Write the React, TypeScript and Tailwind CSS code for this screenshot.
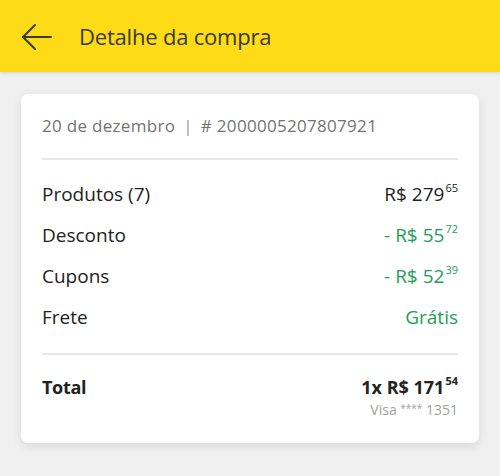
type Row = { label: string; prefix: string; whole: string; cents?: string; green?: boolean };

const rows: Row[] = [
  { label: "Produtos (7)", prefix: "R$ ", whole: "279", cents: "65" },
  { label: "Desconto", prefix: "- R$ ", whole: "55", cents: "72", green: true },
  { label: "Cupons", prefix: "- R$ ", whole: "52", cents: "39", green: true },
  { label: "Frete", prefix: "", whole: "Grátis", green: true },
];

const Price = ({ prefix, whole, cents }: { prefix: string; whole: string; cents?: string }) => (
  <span className="flex items-start leading-none">
    <span className="whitespace-pre">
      {prefix}
      {whole}
    </span>
    {cents && <span className="text-[11px] leading-none ml-[1px] -mt-[3px]">{cents}</span>}
  </span>
);

const BackArrow = () => (
  <svg width="32" height="28" viewBox="0 0 32 28" fill="none" stroke="#3b3a26" strokeWidth="2" strokeLinecap="round" strokeLinejoin="round">
    <path d="M2 14H30" />
    <path d="M14 2L2 14L14 26" />
  </svg>
);

const App = () => {
  return (
    <div
      className="w-[500px] h-[476px] bg-[#f0f0f0] overflow-hidden"
      style={{ fontFamily: "'Open Sans', 'Liberation Sans', sans-serif" }}
    >
      <header className="h-[72px] bg-[#fedb17] flex items-center shadow-[0_1px_3px_rgba(0,0,0,0.12)]">
        <div className="w-[79px] flex items-center pl-[21px] pt-[1px]">
          <BackArrow />
        </div>
        <h1 className="text-[22px] text-[#3b3a2a] tracking-[-0.2px]">Detalhe da compra</h1>
      </header>

      <main className="px-[21px] pt-[22px]">
        <section className="bg-white rounded-[7px] shadow-[0_3px_10px_rgba(0,0,0,0.1)] px-[21px] pb-[26px]">
          <div className="h-[64px] flex items-center text-[17px] text-[#737373] tracking-[0.3px]">
            20 de dezembro <span className="mx-[8px] text-[#999]">|</span> # 2000005207807921
          </div>
          <div className="h-[2px] bg-[#e8e8e8]" />

          <div className="pt-[14px] pb-[15px]">
            {rows.map((r) => (
              <div key={r.label} className="h-[41px] flex items-center justify-between text-[19px]">
                <span className="text-[#222]">{r.label}</span>
                <span className={r.green ? "text-[#1f9d55]" : "text-[#222]"}>
                  <Price prefix={r.prefix} whole={r.whole} cents={r.cents} />
                </span>
              </div>
            ))}
          </div>

          <div className="h-[2px] bg-[#e8e8e8]" />

          <div className="pt-[23px] flex justify-between">
            <span className="text-[18px] font-bold tracking-[-0.3px] text-[#222] leading-none">Total</span>
            <div className="flex flex-col items-end">
              <span className="text-[18px] font-bold text-[#222]">
                <Price prefix="1x R$ " whole="171" cents="54" />
              </span>
              <span className="text-[14px] text-[#a0a0a0] mt-[7px] leading-none">
                Visa <span className="text-[10px] align-top">****</span> 1351
              </span>
            </div>
          </div>
        </section>
      </main>
    </div>
  );
};

export default App;
